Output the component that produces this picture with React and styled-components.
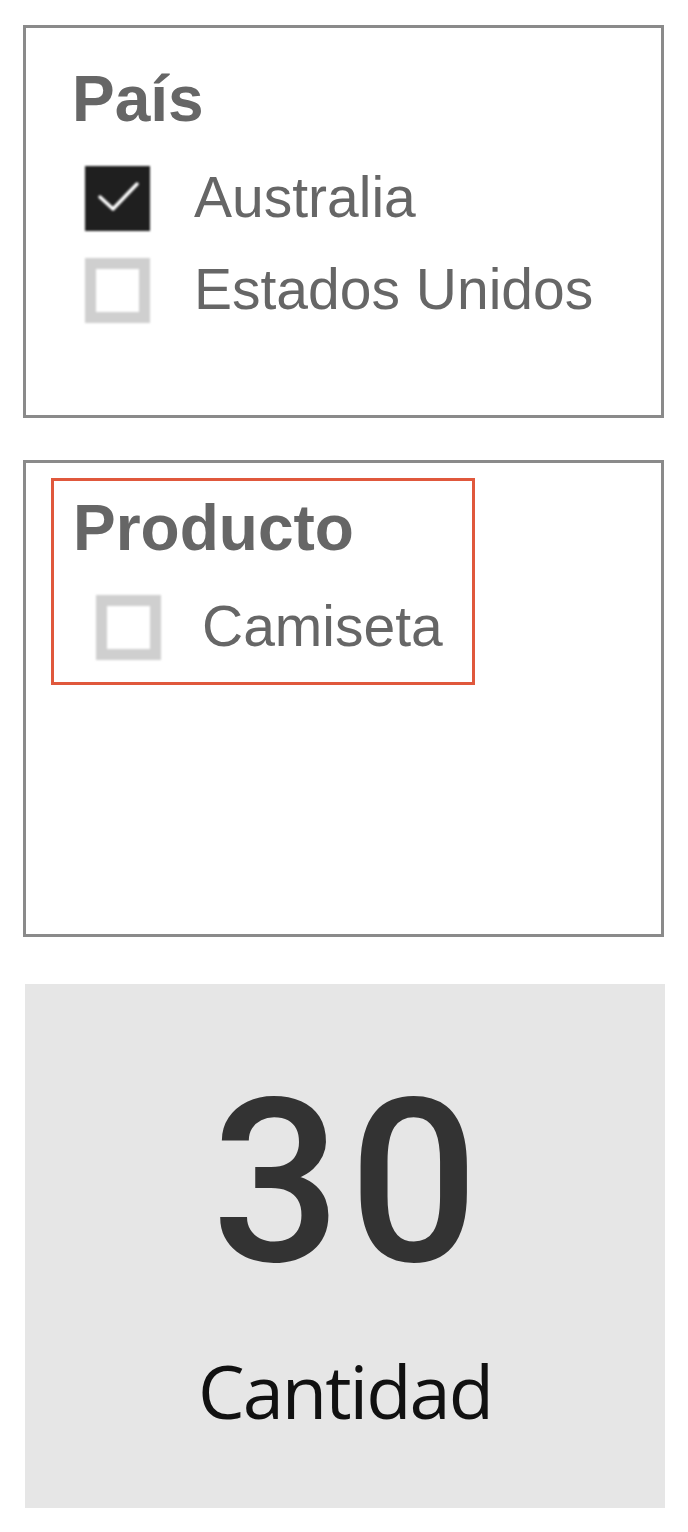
import styled, { createGlobalStyle } from "styled-components";

const GlobalStyle = createGlobalStyle`
  html, body {
    margin: 0;
    padding: 0;
    background: #ffffff;
  }
  body {
    font-family: "Liberation Sans", Arial, sans-serif;
  }
`;

const Page = styled.div`
  display: flex;
  flex-direction: column;
  padding: 25px 0 0 23px;
  width: 688px;
  box-sizing: border-box;
`;

const Slicer = styled.div`
  width: 641px;
  height: ${(p) => p.$height}px;
  border: 3px solid #8a8a8a;
  box-sizing: border-box;
  margin-bottom: ${(p) => p.$gap}px;
  background: #fff;
`;

const SlicerBody = styled.div`
  padding: 39px 0 0 46px;
`;

const Highlight = styled.div`
  width: 424px;
  margin: 15px 0 0 25px;
  padding: 15px 0 22px 19px;
  border: 3px solid #e0583c;
  box-sizing: border-box;
`;

const Title = styled.div`
  font-family: "Liberation Sans", Arial, sans-serif;
  font-weight: 700;
  font-size: 64px;
  line-height: 1;
  color: #666666;
`;

const Options = styled.div`
  display: flex;
  flex-direction: column;
  gap: 27px;
  margin-top: 35px;
  padding-left: ${(p) => p.$indent}px;
`;

const Option = styled.div`
  display: flex;
  align-items: center;
  gap: ${(p) => p.$gap}px;
  height: 65px;
`;

const Box = styled.div`
  width: 65px;
  height: 65px;
  box-sizing: border-box;
  flex-shrink: 0;
  display: flex;
  align-items: center;
  justify-content: center;
  filter: blur(1.2px);
  background: ${(p) => (p.$checked ? "#1f1f1f" : "#ffffff")};
  border: ${(p) => (p.$checked ? "none" : "11px solid #cfcfcf")};
`;

const Label = styled.span`
  font-family: "Liberation Sans", Arial, sans-serif;
  font-size: 57px;
  line-height: 1;
  color: #666666;
  margin-top: -3px;
`;

const Card = styled.div`
  width: 640px;
  height: 524px;
  margin-left: 2px;
  background: #e6e6e6;
  display: flex;
  flex-direction: column;
  align-items: center;
  padding-top: 85px;
  box-sizing: border-box;
`;

const Value = styled.div`
  font-family: Roboto, "DejaVu Sans", sans-serif;
  font-weight: 500;
  font-size: 228px;
  line-height: 1;
  color: #333333;
  letter-spacing: 8px;
  margin-left: 8px;
`;

const Caption = styled.div`
  font-family: "Open Sans", "Noto Sans", sans-serif;
  font-size: 74px;
  line-height: 1;
  color: #111111;
  letter-spacing: -2px;
  margin-top: 57px;
`;

const Check = () => (
  <svg width="65" height="65" viewBox="0 0 65 65">
    <path
      d="M15 31 L28 43 L52 18"
      fill="none"
      stroke="#ffffff"
      strokeWidth="3.5"
      strokeLinecap="round"
      strokeLinejoin="round"
    />
  </svg>
);

const CheckItem = ({ label, checked, gap }) => (
  <Option $gap={gap}>
    <Box $checked={checked}>{checked && <Check />}</Box>
    <Label>{label}</Label>
  </Option>
);

const App = () => {
  return (
    <>
      <GlobalStyle />
      <Page>
        <Slicer $height={393} $gap={42}>
          <SlicerBody>
            <Title>País</Title>
            <Options $indent={13}>
              <CheckItem label="Australia" checked gap={44} />
              <CheckItem label="Estados Unidos" gap={44} />
            </Options>
          </SlicerBody>
        </Slicer>
        <Slicer $height={477} $gap={47}>
          <Highlight>
            <Title>Producto</Title>
            <Options $indent={23}>
              <CheckItem label="Camiseta" gap={41} />
            </Options>
          </Highlight>
        </Slicer>
        <Card>
          <Value>30</Value>
          <Caption>Cantidad</Caption>
        </Card>
      </Page>
    </>
  );
};

export default App;
